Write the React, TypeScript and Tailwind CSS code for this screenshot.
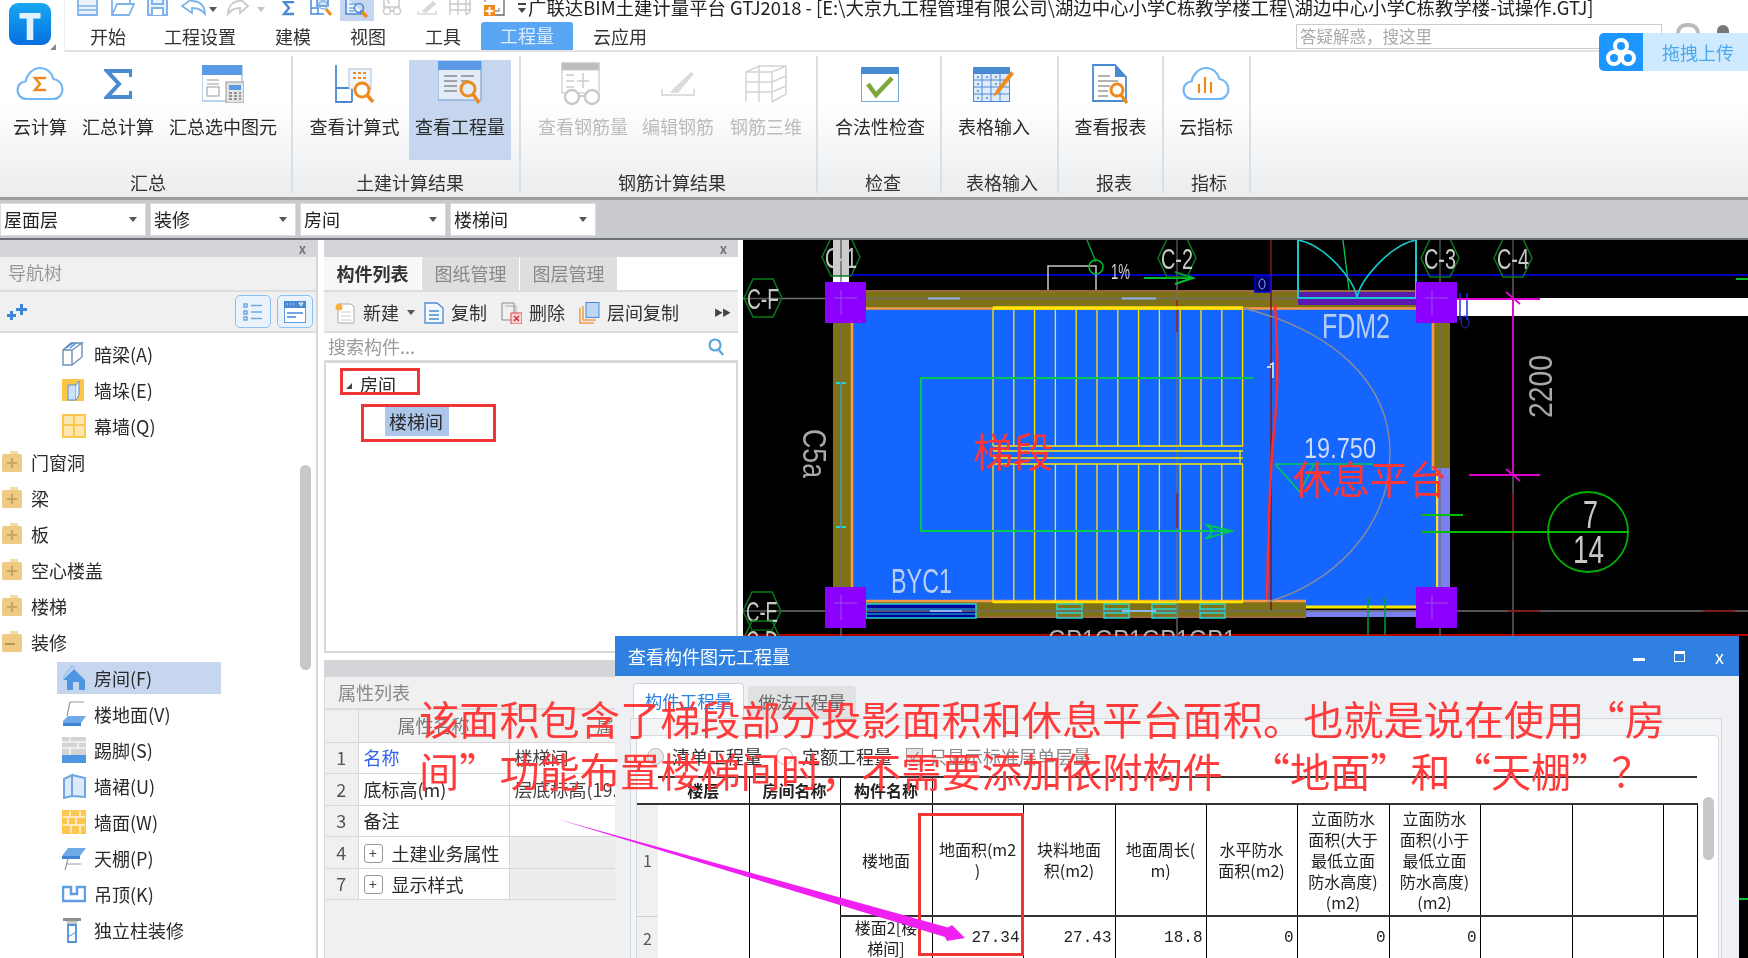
import React from "react";

const B = "#4a8ad4";
const LB = "#7fb4ea";
const O = "#ee8a1e";
const G = "#c8cacc";

function Cloud({ stroke = "#74b6f2", children }: { stroke?: string; children?: React.ReactNode }) {
  return (
    <svg width="48" height="36" viewBox="0 0 48 36" fill="none">
      <path d="M11 33C5 33 1.500 29 1.500 24c0-5 4-8.500 8-8.500C11 8 17 2 24 2c7 0 12 5 13.500 11 5 .5 9 5 9 10.500 0 5-4 9.500-9.500 9.500z" stroke={stroke} strokeWidth="2.200" />
      {children}
    </svg>
  );
}

function RibbonBtn({ w, label, off, active, children }: { w: number; label: string; off?: boolean; active?: boolean; children: React.ReactNode }) {
  return (
    <div style={{ width: w }} className={`flex flex-col items-center h-[100px] ${active ? "bg-[#c5d6ee]" : ""}`}>
      <div className="h-[48px] flex items-center justify-center">{children}</div>
      <div className={`mt-[6px] h-[24px] leading-[24px] text-[18px] whitespace-nowrap ${off ? "text-[#bcbcbc]" : "text-[#2a2a2a]"}`}>{label}</div>
    </div>
  );
}

function Group({ w, pl, label, lc, children }: { w: number; pl: number; label: string; lc: number; children: React.ReactNode }) {
  return (
    <div style={{ width: w }} className="h-[137px] mt-[4px] border-r-2 border-[#dcdfe1] flex flex-col shrink-0">
      <div style={{ paddingLeft: pl }} className="flex h-[114px] pt-[4px] shrink-0">{children}</div>
      <div style={{ marginLeft: lc }} className="w-0 flex justify-center text-[18px] leading-[24px] text-[#333] whitespace-nowrap">{label}</div>
    </div>
  );
}

const caret = (c: string) => <span className="block w-0 h-0 border-x-[4px] border-x-transparent" style={{ borderTop: `5px solid ${c}` }} />;

// [centre x, width, icon] of the quick access icons, cropped by the top of the window
const quick: [number, number, React.ReactNode][] = [
  [87.5, 21, <svg width="21" height="16" viewBox="0 0 21 16" fill="#eaf3fc" stroke={LB} strokeWidth="1.800"><path d="M1 -2v17h19V-2" /><path d="M1 6h19M1 10h19" strokeWidth="1.300" /></svg>],
  [123, 24, <svg width="24" height="16" viewBox="0 0 24 16" fill="none" stroke={LB} strokeWidth="1.800"><path d="M1 -2v17h17l5-11h-4V-2" /><path d="M1 15L6 4h17" /></svg>],
  [157.5, 21, <svg width="21" height="16" viewBox="0 0 21 16" fill="#eaf3fc" stroke={LB} strokeWidth="2"><path d="M1 -2v17h19V-2" /><path d="M5 15V8h11v7" fill="#fff" /><path d="M5 -2v6h11v-6" /></svg>],
  [193.5, 27, <svg width="27" height="16" viewBox="0 0 27 16" fill="none" stroke={LB} strokeWidth="1.800"><path d="M12 -1L2 6l10 7V8c6 0 10 2 13 6 0-8-5-13-13-13z" /></svg>],
  [213, 8, <span className="block mb-[4px]">{caret("#555")}</span>],
  [238.5, 23, <svg width="23" height="16" viewBox="0 0 23 16" fill="none" stroke={G} strokeWidth="1.800"><path d="M13 -1l8 7-8 7V8C8 8 4 10 1 14c0-8 5-13 12-13z" /></svg>],
  [261, 8, <span className="block mb-[4px]">{caret("#c4c4c4")}</span>],
  [288, 14, <svg width="14" height="15" viewBox="0 0 14 15" fill="none" stroke={B} strokeWidth="2.400"><path d="M13 1H3l5 6-5 6h10" /></svg>],
  [321.5, 23, <svg width="23" height="16" viewBox="0 0 23 16" fill="none" stroke={B} strokeWidth="1.500"><path d="M1 -2v16h13M1 8h7v6" /><rect x="7" y="-3" width="11" height="9" fill="#cfe1f5" /><circle cx="13" cy="5" r="4" stroke="#7fb4ea" /><path d="M16 9l5 6" stroke={O} strokeWidth="3" /></svg>],
];
const quick2: [number, number, React.ReactNode][] = [
  [392, 20, <svg width="20" height="16" viewBox="0 0 20 16" fill="none" stroke={G} strokeWidth="1.600"><path d="M2 -2v9h15v-9M6 3h2M6 -1v3" /><circle cx="5" cy="11" r="3.500" /><circle cx="15" cy="11" r="3.500" /><path d="M8.500 11h3" /></svg>],
  [427, 20, <svg width="20" height="15" viewBox="0 0 20 15" fill="none" stroke="#d8d8d8" strokeWidth="1.600"><path d="M1 10v3h18v-3" /><path d="M6 10L16 1l2 2L9 11z" fill="#d8d8d8" /></svg>],
  [460, 24, <svg width="24" height="16" viewBox="0 0 24 16" fill="none" stroke={G} strokeWidth="1.400"><path d="M2 -2v17M10 -2v17M18 -2v17M1 4h22M1 10h22M22 -2v14l-4 3" /></svg>],
  [494.5, 21, <svg width="21" height="16" viewBox="0 0 21 16" fill="none"><path d="M1 -2h19v17H10" stroke="#666" strokeWidth="1.300" /><path d="M15 8v3h-4" stroke="#999" strokeWidth="1.300" /><path d="M1 -2v4M5 -2h4" stroke="#666" /><rect x="0" y="5" width="11" height="11" fill="#f08a1e" /><path d="M4.500 7h2v3h3v2h-3v3h-2v-3h-3v-2h3z" fill="#fff" /></svg>],
];

function QuickRun({ items, start }: { items: [number, number, React.ReactNode][]; start: number }) {
  let end = start;
  return (
    <>
      {items.map(([c, w, n], i) => {
        const ml = c - w / 2 - end;
        end = c + w / 2;
        return (
          <div key={i} style={{ marginLeft: ml, width: w }} className="h-[16px] shrink-0 flex items-end justify-center overflow-hidden">{n}</div>
        );
      })}
    </>
  );
}

function Sel({ label }: { label: string }) {
  return (
    <div className="w-[146px] h-[33px] bg-white border border-[#dcdcdc] flex items-center justify-between pl-[3px] pr-[8px] text-[18px] text-[#222] shrink-0">
      <span>{label}</span>
      {caret("#555")}
    </div>
  );
}

function FolderPlus({ open }: { open?: boolean }) {
  return (
    <svg width="22" height="24" viewBox="0 0 22 24">
      <path d="M9 1h8v3H9z" fill="#f3dba8" />
      <rect x="1" y="4" width="20" height="18" rx="2" fill="#eeca82" />
      {open ? <path d="M4 13h10v2H4z" fill="#b8954c" /> : <path d="M10 8h2v4h4v2h-4v4h-2v-4H6v-2h4z" fill="#c9a45c" />}
    </svg>
  );
}

const treeIcon: Record<string, React.ReactNode> = {
  a: <svg width="22" height="24" viewBox="0 0 22 24" fill="none" stroke="#6d8fb8" strokeWidth="1.400"><path d="M1 8v15h9V8zM1 8l8-7h11l-10 7M10 23l10-8V1" /><path d="M4 6l7-5M8 6l6-5" stroke="#4a8ad4" /></svg>,
  e: <svg width="22" height="22" viewBox="0 0 22 22"><rect x="0" y="0" width="22" height="22" fill="#fbc548" /><path d="M6 6h8v15H6z" fill="#cfe1f5" stroke="#5f93cf" /><path d="M14 6l3-4v14l-3 5" fill="#e6f0fa" stroke="#5f93cf" /></svg>,
  q: <svg width="24" height="24" viewBox="0 0 24 24"><rect width="24" height="24" fill="#fcc74f" /><path d="M2 2h9v8H2zM13 2h9v8h-9zM2 12h9v10H2zM13 12h9v10h-9z" fill="#fde5ae" /></svg>,
  f: <svg width="24" height="28" viewBox="0 0 24 28"><path d="M12 5L23 16v10h-6v-8h-6v8H5V16H1z" fill="#4e95e2" /><path d="M1 14L10 2l3 2" fill="none" stroke="#9cc5ef" strokeWidth="2" /></svg>,
  v: <svg width="24" height="28" viewBox="0 0 24 28" fill="none"><path d="M1 21l5-5h18l-5 7H1z" fill="#6fa9e8" /><path d="M1 23h18v3H1z" fill="#3f86d8" /><path d="M5 16L8 2h14" stroke="#9a9a9a" strokeWidth="1.200" /></svg>,
  s: <svg width="24" height="26" viewBox="0 0 24 26"><rect width="24" height="18" fill="#d4d4d4" /><path d="M0 5h24M0 11h24M8 0v5M16 5v6M8 11v7" stroke="#f4f4f4" strokeWidth="1.500" /><rect y="18" width="24" height="8" fill="#4e95e2" /></svg>,
  u: <svg width="24" height="26" viewBox="0 0 24 26" fill="#dce9f8" stroke="#6fa5e0" strokeWidth="2"><path d="M2 6l8-4v21l-8 2zM10 2l13 3v19l-13-1" /></svg>,
  w: <svg width="24" height="24" viewBox="0 0 24 24"><rect width="24" height="24" fill="#fcc74f" /><path d="M1 7h22M1 15h22M8 1v6M18 1v6M6 7v8M14 7v8M9 15v8M18 15v8" stroke="#fdeac0" strokeWidth="2" /></svg>,
  p: <svg width="24" height="28" viewBox="0 0 24 28" fill="none"><path d="M0 12l6-8h18l-6 8z" fill="#6fa9e8" /><path d="M0 12h18v3H0z" fill="#3f86d8" /><path d="M6 15l-3 11M5 20h14" stroke="#9a9a9a" strokeWidth="1.200" /></svg>,
  k: <svg width="24" height="18" viewBox="0 0 24 18" fill="none" stroke="#5f9ee2" strokeWidth="2.500"><path d="M1 2v14h22V2h-8v7H9V2z" /></svg>,
  c: <svg width="20" height="26" viewBox="0 0 20 26" fill="none"><path d="M1 1h18v3H1z" fill="#8f8f8f" /><path d="M4 4h12l-2 4H6z" fill="#c8c8c8" /><path d="M6 8h8v17H6z" stroke="#4e8fd8" strokeWidth="1.800" /><path d="M6 20l8-5" stroke="#4e8fd8" /></svg>,
};

const subA = [["a", "暗梁(A)"], ["e", "墙垛(E)"], ["q", "幕墙(Q)"]];
const parents = ["门窗洞", "梁", "板", "空心楼盖", "楼梯"];
const subB = [["f", "房间(F)"], ["v", "楼地面(V)"], ["s", "踢脚(S)"], ["u", "墙裙(U)"], ["w", "墙面(W)"], ["p", "天棚(P)"], ["k", "吊顶(K)"], ["c", "独立柱装修"]];

function SubRow({ i, t, sel }: { i: string; t: string; sel?: boolean }) {
  return (
    <div className="h-[36px] flex items-center pl-[57px]">
      <div className={`w-[164px] h-[32px] flex items-center pl-[5px] ${sel ? "bg-[#c5d6ee]" : ""}`}>
        <div className="w-[32px] flex items-center">{treeIcon[i]}</div>
        <span className="text-[18px] text-[#2a2a2a] whitespace-nowrap">{t}</span>
      </div>
    </div>
  );
}

function ParentRow({ t, open }: { t: string; open?: boolean }) {
  return (
    <div className="h-[36px] flex items-center pl-[1px]">
      <div className="w-[30px]"><FolderPlus open={open} /></div>
      <span className="text-[18px] text-[#2a2a2a]">{t}</span>
    </div>
  );
}

function PanelHead({ closeMr }: { closeMr: number }) {
  return (
    <div className="h-[17px] bg-[#d4d5d9] flex items-center justify-end shrink-0">
      <span style={{ marginRight: closeMr }} className="text-[13px] leading-[14px] text-[#777] font-bold">x</span>
    </div>
  );
}

function Cad() {
  const steps = Array.from({ length: 13 }, (_, i) => 993 + i * 20.8);
  return (
    <svg width="1005" height="718" viewBox="743 240 1005 718" className="block font-['Liberation_Sans']">
      <rect x="743" y="240" width="1005" height="718" fill="#000" />
      <rect x="1457" y="298" width="291" height="18" fill="#fff" />
      <rect x="833" y="240" width="16" height="42" fill="#fff" />
      <path d="M850 275H1748" stroke="#0000c0" strokeWidth="2" />
      <path d="M743 635H1748" stroke="#b00000" strokeWidth="2" />
      {/* room */}
      <rect x="852" y="308" width="585" height="294" fill="#1565ff" />
      <rect x="1306" y="600" width="131" height="8" fill="#1565ff" />
      {/* walls */}
      <rect x="833" y="290" width="617" height="18" fill="#7f7216" />
      <rect x="833" y="290" width="19" height="312" fill="#7f7216" />
      <rect x="1431" y="290" width="19" height="180" fill="#7f7216" />
      <rect x="1437" y="468" width="13" height="150" fill="#7a80f0" />
      <rect x="833" y="600" width="473" height="18" fill="#7f7216" />
      <rect x="1306" y="610" width="144" height="7" fill="#7a80f0" />
      <path d="M833 291H1450M833 617H1306" stroke="#a06a4a" strokeWidth="1.500" />
      <path d="M1306 607H1416" stroke="#ffe600" strokeWidth="3" />
      <path d="M1437 470V605" stroke="#ffe600" strokeWidth="2" />
      <path d="M866 308.500H1416M852 323V600M866 601H1306M1433 323V470" stroke="#f59a4a" strokeWidth="2.500" fill="none" />
      {/* windows */}
      <path d="M841 383V527M836 383h10M836 527h10" stroke="#25d5d5" strokeWidth="2" fill="none" />
      <rect x="866" y="604" width="110" height="14" fill="#00009a" stroke="#25d5d5" strokeWidth="1.500" />
      <path d="M866 609H976M866 614H976" stroke="#25d5d5" />
      {[1057, 1104, 1152, 1200].map((x) => (
        <g key={x} fill="none" stroke="#25d5d5" strokeWidth="1.500"><rect x={x} y="604" width="25" height="14" /><path d={`M${x} 609h25M${x} 613h25`} /></g>
      ))}
      {/* axes */}
      <path d="M743 298.500H1457M743 611H1748M841 240V640M1177 240V636M1440 240V636M1513 240V636" stroke="#6f6f6f" strokeWidth="1.300" fill="none" />
      <path d="M1271 240V610" stroke="#7a1a1a" strokeWidth="1.500" />
      <path d="M1177 300V332M1177 493V528" stroke="#a02020" strokeWidth="1.500" />
      <path d="M1513 493V540M1508 611h32M1703 611h32" stroke="#8a0a0a" strokeWidth="1.500" />
      <path d="M928 298.500h32M1122 298.500h34M1314 298.500h32M930 611h32M1122 611h34" stroke="#8fb2f0" strokeWidth="2" />
      {/* stair */}
      {steps.map((x) => (
        <path key={x} d={`M${x} 307V446M${x} 464V603`} stroke="#ffe600" strokeWidth="1.300" />
      ))}
      <path d="M993 308H1243" stroke="#ffe600" strokeWidth="3.500" />
      <path d="M993 602H1243" stroke="#ffe600" strokeWidth="2.500" />
      <path d="M993 446H1243M993 451H1243M993 458H1243M993 464H1243" stroke="#ffe600" strokeWidth="1.500" />
      <path d="M1240 451V464" stroke="#ffe600" strokeWidth="1.300" />
      <path d="M1253 378H921V531H1232" stroke="#00c853" strokeWidth="2" fill="none" />
      <path d="M1207 525l25 6-25 7 6-7z" fill="none" stroke="#00c853" strokeWidth="1.800" />
      <path d="M1243 308C1330 330 1390 380 1390 453C1390 530 1330 585 1267 602" stroke="#8c8c96" strokeWidth="1.400" fill="none" />
      <path d="M1275 305C1278 350 1279 390 1274 430C1270 470 1268 540 1267 600" stroke="#ff2d2d" strokeWidth="2.500" fill="none" />
      <path d="M1270 365l3-2v15M1267 367h4" stroke="#fff" strokeWidth="1.400" fill="none" />
      <path d="M1275 464h98M1275 464l25 28 14-28" stroke="#00c853" strokeWidth="1.600" fill="none" />
      <path d="M1368 597V635M1385 597V635" stroke="#00a030" strokeWidth="1.500" />
      {/* door */}
      <rect x="1298" y="292" width="118" height="13" fill="#5a1ab0" />
      <path d="M1298 240V298M1416 240V298M1298 298H1416" stroke="#16c8d0" strokeWidth="2" fill="none" />
      <path d="M1298 240C1325 245 1355 280 1357 298M1416 240C1390 245 1360 280 1357 298" stroke="#16c8d0" strokeWidth="1.600" fill="none" />
      <path d="M1343 240L1349 290" stroke="#00c853" strokeWidth="1.300" />
      {/* columns */}
      {[[825, 282], [1416, 282], [825, 587], [1416, 587]].map(([x, y]) => (
        <g key={`${x}${y}`}>
          <rect x={x} y={y} width="41" height="41" fill="#8c00ff" />
          <path d={`M${x + 9} ${y + 16}h23M${x + 16} ${y + 8}v25`} fill="none" stroke="#a050d8" strokeWidth="1" />
        </g>
      ))}
      {/* level mark */}
      <path d="M1048 290V266H1096V290" stroke="#c8c8c8" strokeWidth="1.500" fill="none" />
      <path d="M1087 240L1096 262" stroke="#00b030" strokeWidth="1.300" />
      <ellipse cx="1096" cy="267" rx="7" ry="7" fill="none" stroke="#00c030" strokeWidth="1.500" />
      <path d="M1144 278H1190M1175 272l18 6-18 6" stroke="#00c030" strokeWidth="2" fill="none" />
      <rect x="1255" y="276" width="15" height="16" fill="#000060" stroke="#0000e0" strokeWidth="1.500" />
      <ellipse cx="1262" cy="284" rx="3" ry="5" fill="none" stroke="#8aa0ff" />
      <path d="M1460 293V320M1467 293V320" stroke="#2030e0" strokeWidth="1.500" />
      <ellipse cx="1465" cy="322" rx="4" ry="6" fill="none" stroke="#2030e0" />
      {/* dim */}
      <path d="M1513 298V475M1457 299H1540M1469 475H1540M1506 292l14 12M1506 469l14 12" stroke="#e000d0" strokeWidth="1.800" fill="none" />
      {/* section mark */}
      <ellipse cx="1588" cy="532" rx="40" ry="40" fill="none" stroke="#00b000" strokeWidth="1.800" />
      <path d="M1422 532H1628M1422 515H1463" stroke="#00c000" strokeWidth="2" />
      <path d="M1748 279h-12" stroke="#00c030" strokeWidth="2" />
      <path d="M1739 899H1748" stroke="#00c030" strokeWidth="2" />
      {/* axis bubbles */}
      {[[841, 257, "C-1"], [1177, 258, "C-2"], [1440, 258, "C-3"], [1513, 258, "C-4"], [763, 298, "C-F"], [762, 611, "C-E"], [762, 640, "C-D"]].map(([x, y, t]) => (
        <g key={t as string}>
          <path d={`M${(x as number) - 19} ${y}l9-19h20l9 19-9 19h-20z`} fill="#000" fillOpacity="0.2" stroke="#0a7a1a" strokeWidth="1.500" />
          <text x={(x as number) - 16} y={(y as number) + 11} fontSize="30" fill="#c4cac4" textLength="32" lengthAdjust="spacingAndGlyphs">{t}</text>
        </g>
      ))}
      <text x="1111" y="279" fontSize="22" fill="#d0d0d0" textLength="19" lengthAdjust="spacingAndGlyphs">1%</text>
      <text x="1322" y="338" fontSize="35" fill="#b8cdf2" textLength="68" lengthAdjust="spacingAndGlyphs">FDM2</text>
      <text x="1304" y="458" fontSize="29" fill="#cfdcf5" textLength="72" lengthAdjust="spacingAndGlyphs">19.750</text>
      <text x="891" y="593" fontSize="35" fill="#b8cdf2" textLength="61" lengthAdjust="spacingAndGlyphs">BYC1</text>
      <text x="1048" y="648" fontSize="26" fill="#b0b0b0" textLength="188" lengthAdjust="spacingAndGlyphs">GP1GP1GP1GP1</text>
      <text transform="translate(800 429) rotate(90)" fontSize="34" fill="#a8a8a8" textLength="49" lengthAdjust="spacingAndGlyphs" y="-3">C5a</text>
      <text transform="translate(1552 418) rotate(-90)" fontSize="33" fill="#a8a8a8" textLength="63" lengthAdjust="spacingAndGlyphs">2200</text>
      <text x="1583" y="528" fontSize="39" fill="#c8c8c8" textLength="15" lengthAdjust="spacingAndGlyphs">7</text>
      <text x="1573" y="563" fontSize="39" fill="#c8c8c8" textLength="31" lengthAdjust="spacingAndGlyphs">14</text>
      <text x="973" y="467" fontSize="40" fill="#ff3535" className="font-['Noto_Sans_CJK_SC']">梯段</text>
      <text x="1293" y="494" fontSize="38.500" fill="#ff3535" className="font-['Noto_Sans_CJK_SC']">休息平台</text>
    </svg>
  );
}

const propRows: { n: string; name: string; v?: string; blue?: boolean; plus?: boolean }[] = [
  { n: "1", name: "名称", v: "楼梯间", blue: true },
  { n: "2", name: "底标高(m)", v: "层底标高(19.750)" },
  { n: "3", name: "备注", v: "" },
  { n: "4", name: "土建业务属性", plus: true },
  { n: "7", name: "显示样式", plus: true },
];

const colW = [91, 91, 92, 91, 92, 91, 91, 92, 91, 92, 91, 34];
const cell = "border-r border-black text-center align-middle text-[16px] leading-[21px] text-[#222]";
const hdrs: React.ReactNode[] = [
  <>地面积(m2<br />)</>,
  <>块料地面<br />积(m2)</>,
  <>地面周长(<br />m)</>,
  <>水平防水<br />面积(m2)</>,
  <>立面防水<br />面积(大于<br />最低立面<br />防水高度)<br />(m2)</>,
  <>立面防水<br />面积(小于<br />最低立面<br />防水高度)<br />(m2)</>,
];
const vals = ["27.34", "27.43", "18.8", "0", "0", "0"];

function Dialog() {
  return (
    <div className="absolute left-[615px] top-[636px] w-[1124px] h-[322px] bg-[#eef0f3] flex flex-col overflow-hidden z-10">
      <div className="h-[40px] bg-[#2f80e0] flex items-center text-white shrink-0">
        <span className="ml-[13px] text-[18px]">查看构件图元工程量</span>
        <div className="ml-auto flex items-center mr-[15px]">
          <span className="block w-[12px] h-[3px] bg-white mt-[7px] mr-[29px]" />
          <span className="block w-[11px] h-[11px] border border-white border-t-[3px] mr-[30px]" />
          <span className="text-[18px] leading-[18px]">x</span>
        </div>
      </div>
      <div className="h-[42px] pt-[7px] pl-[18px] flex items-end gap-[4px] shrink-0">
        <div className="w-[111px] h-[35px] bg-white border border-b-0 border-[#cfd3d8] rounded-t-[4px] text-[#2a80e0] text-[17.500px] text-center leading-[34px]">构件工程量</div>
        <div className="w-[108px] h-[32px] bg-[#dfe1e3] rounded-t-[4px] text-[#666] text-[17.500px] text-center leading-[32px]">做法工程量</div>
      </div>
      <div className="flex-1 ml-[15px] mr-[17px] border border-[#d6d9dc] bg-[#f3f4f5] pt-[16px] pl-[5px] pr-[2px]">
        <div className="h-full bg-white border border-[#d6d9dc] rounded-t-[4px]">
          <div className="h-[40px] flex items-center text-[18px] text-[#333] pl-[10px]">
            <span className="w-[17px] h-[17px] rounded-full border border-[#b5b5b5] bg-[#e8e8e8] mr-[8px]" />
            <span>清单工程量</span>
            <span className="w-[17px] h-[17px] rounded-full border border-[#b5b5b5] ml-[14px] mr-[9px]" />
            <span>定额工程量</span>
            <span className="w-[17px] h-[17px] border border-[#999] bg-[#e5e5e5] ml-[14px] mr-[6px] flex items-center justify-center text-[12px] leading-none text-[#777]">✓</span>
            <span className="text-[#8a8a8a]">只显示标准层单层量</span>
          </div>
          <div className="flex">
            <table className="table-fixed border-collapse w-[1060px]">
              <colgroup>
                <col className="w-[21px]" />
                {colW.map((w, i) => <col key={i} style={{ width: w }} />)}
              </colgroup>
              <tbody>
                <tr className="h-[27px] border-b-2 border-[#333]">
                  <td className="bg-white border-0" />
                  {["楼层", "房间名称", "构件名称"].map((t) => <td key={t} className={`${cell} font-bold border-t-2 border-t-[#333]`}>{t}</td>)}
                  <td colSpan={9} className="border-t-2 border-t-[#333]" />
                </tr>
                <tr className="h-[112px]">
                  <td className="bg-[#f0f0f0] text-[#555] text-[16px] text-center border-b border-[#d0d0d0]">1</td>
                  <td className={cell} />
                  <td className={cell} />
                  <td className={`${cell} border-b-2 border-b-[#333]`}>楼地面</td>
                  {hdrs.map((h, i) => <td key={i} className={`${cell} border-b-2 border-b-[#333]`}>{h}</td>)}
                  {[0, 1, 2].map((i) => <td key={i} className={`${cell} border-b-2 border-b-[#333]`} />)}
                  <td className="border-b-2 border-b-[#333]" />
                </tr>
                <tr className="h-[44px]">
                  <td className="bg-[#f0f0f0] text-[#555] text-[16px] text-center">2</td>
                  <td className={cell} />
                  <td className={cell} />
                  <td className={`${cell} align-top`}>楼面2[楼<br />梯间]</td>
                  {vals.map((v, i) => <td key={i} className={`${cell} text-right pr-[3px] font-['Liberation_Mono'] text-[15px]`}>{v}</td>)}
                  {[0, 1, 2].map((i) => <td key={i} className={cell} />)}
                  <td />
                </tr>
              </tbody>
            </table>
            <div className="ml-[6px] mt-[21px] w-[11px] h-[63px] rounded-full bg-[#c8c8c8]" />
          </div>
        </div>
      </div>
    </div>
  );
}

export default function App() {
  return (
    <div className="relative w-[1748px] h-[958px] overflow-hidden bg-white flex flex-col font-['Noto_Sans_CJK_SC','Noto_Sans',sans-serif] blur-[0.5px]">
      {/* top */}
      <div className="h-[52px] flex shrink-0">
        <div className="w-[64px] relative pl-[9px] pt-[3px]">
          <div className="w-[42px] h-[42px] rounded-[9px] bg-linear-to-b from-[#1aa7f2] to-[#0a6fe0] flex items-center justify-center text-[#dff2ff] text-[36px] font-black leading-none">T</div>
          <span className="absolute right-[8px] bottom-[2px] w-0 h-0 border-l-[6px] border-l-transparent border-b-[6px] border-b-[#888]" />
        </div>
        <div className="flex-1 flex flex-col border-b-2 border-[#e2e2e2] border-l border-l-[#eee] min-w-0">
          <div className="h-[22px] flex items-start overflow-hidden">
            <QuickRun items={quick} start={65} />
            <div className="ml-[7px] w-[34px] h-[21px] shrink-0 bg-[#c5d6ee] flex items-start justify-center overflow-hidden">
              <svg width="24" height="18" viewBox="0 0 24 18" fill="none" stroke={B} strokeWidth="1.600"><path d="M1 -2v16h15V10" fill="#eaf3fc" /><path d="M4 4h8M4 8h6M4 11h5" strokeWidth="1.200" /><circle cx="14" cy="8" r="4.500" stroke={B} /><path d="M17 12l5 5" stroke={O} strokeWidth="3.500" /></svg>
            </div>
            <QuickRun items={quick2} start={374} />
            <div className="ml-[12px] w-[10px] flex flex-col items-center shrink-0 pt-[3px] gap-[3px]">
              <span className="block w-[8px] h-[1.500px] bg-[#444]" />
              {caret("#444")}
            </div>
            <span className="ml-[1px] mt-[-4px] text-[18.400px] leading-[22px] text-[#222] whitespace-nowrap">广联达BIM土建计量平台 GTJ2018 - [E:\大京九工程管理有限公司\湖边中心小学C栋教学楼工程\湖边中心小学C栋教学楼-试操作.GTJ]</span>
          </div>
          <div className="h-[28px] flex items-end text-[18px] leading-[27px] text-[#333]">
            <span className="ml-[25px]">开始</span>
            <span className="ml-[38px]">工程设置</span>
            <span className="ml-[39px]">建模</span>
            <span className="ml-[39px]">视图</span>
            <span className="ml-[39px]">工具</span>
            <span className="ml-[20px] w-[92px] h-[28px] bg-[#58a6f4] rounded-t-[3px] text-white/80 text-center">工程量</span>
            <span className="ml-[20px]">云应用</span>
            <div className="ml-auto self-start mt-[2px] w-[366px] h-[25px] border border-[#ccc] bg-white text-[16.500px] leading-[23px] text-[#aaa] pl-[3px]">答疑解惑，搜这里</div>
            <span className="ml-[14px] self-start mt-[1px] w-[24px] h-[20px] rounded-full border-[4px] border-[#bbb]" />
            <span className="ml-[17px] mr-[19px] self-start mt-[3px] w-[12px] h-[20px] rounded-t-full bg-[#777]" />
          </div>
        </div>
      </div>

      {/* ribbon */}
      <div className="h-[145px] shrink-0 flex bg-linear-to-b from-white from-35% to-[#eaecee]">
        <Group w={293} pl={1} label="汇总" lc={148}>
          <RibbonBtn w={78} label="云计算"><Cloud><path d="M30 12H19l5 6-5 6h11" fill="none" stroke={O} strokeWidth="2.500" /></Cloud></RibbonBtn>
          <RibbonBtn w={78} label="汇总计算"><svg width="28" height="30" viewBox="0 0 28 30" fill="none"><path d="M27 8V2H3l12 13L3 28h24v-6" stroke={B} strokeWidth="4" /></svg></RibbonBtn>
          <RibbonBtn w={132} label="汇总选中图元">
            <svg width="42" height="38" viewBox="0 0 42 38"><rect x="0" y="0" width="40" height="36" fill="#fff" stroke="#7aa9de" /><rect width="40" height="10" fill="#5b9ae6" /><path d="M5 15h12M5 19h12" stroke="#9a9a9a" /><rect x="5" y="22" width="12" height="9" fill="none" stroke="#9a9a9a" /><rect x="24" y="17" width="18" height="21" fill="#e4e4e4" stroke="#999" /><rect x="27" y="20" width="12" height="5" fill="#5b9ae6" /><path d="M27 28h3M32 28h3M37 28h2M27 31h3M32 31h3M37 31h2M27 34h3M32 34h3M37 34h2" stroke="#777" strokeWidth="1.500" /></svg>
          </RibbonBtn>
        </Group>
        <Group w={228} pl={7} label="土建计算结果" lc={117}>
          <RibbonBtn w={109} label="查看计算式">
            <svg width="40" height="40" viewBox="0 0 40 40" fill="none"><path d="M1 1v37h16M1 24h16v14" stroke="#4a8ad4" strokeWidth="1.800" /><rect x="14" y="5" width="22" height="20" fill="#f2f5fa" stroke="#a8c0dc" /><path d="M18 9h3M23 9h3M28 9h3M18 14h3M23 14h3M28 14h3" stroke={O} strokeWidth="2" /><circle cx="27" cy="26" r="7" stroke={O} strokeWidth="3" fill="#fff" /><path d="M32 31l6 7" stroke={O} strokeWidth="3.500" /></svg>
          </RibbonBtn>
          <RibbonBtn w={102} active label="查看工程量">
            <svg width="44" height="44" viewBox="0 0 44 44" fill="none" className="-mt-[2px]"><rect x="0" y="0" width="43" height="39" fill="#e3ecf7" stroke="#6c9ad0" /><rect width="43" height="9" fill="#5b9ae6" /><path d="M6 15h13M23 15h13M6 20h13M23 20h8M6 25h13M6 30h13" stroke="#8a8a8a" strokeWidth="1.500" /><circle cx="30" cy="28" r="7" stroke={O} strokeWidth="3" fill="#e3ecf7" /><path d="M35 33l6 9" stroke={O} strokeWidth="3.500" /></svg>
          </RibbonBtn>
        </Group>
        <Group w={297} pl={9} label="钢筋计算结果" lc={151}>
          <RibbonBtn w={106} off label="查看钢筋量">
            <svg width="44" height="44" viewBox="0 0 44 44" fill="none" stroke={G}><rect x="1" y="1" width="37" height="30" fill="#fff" strokeWidth="1.200" /><rect x="1" y="1" width="37" height="7" fill="#bdbdbd" /><path d="M5 13h8M5 19h8M5 25h8M22 11v15M16 19h12" strokeWidth="1.500" /><circle cx="11" cy="35" r="7" strokeWidth="2.500" fill="#fff" /><circle cx="31" cy="35" r="7" strokeWidth="2.500" fill="#fff" /><path d="M18 34h6" strokeWidth="2" /></svg>
          </RibbonBtn>
          <RibbonBtn w={84} off label="编辑钢筋">
            <svg width="36" height="26" viewBox="0 0 36 26" fill="none"><path d="M10 22h8L34 3l-3-2-18 17z" fill="#dcdcdc" /><path d="M2 18v6h32v-6" stroke="#dedede" strokeWidth="2" /></svg>
          </RibbonBtn>
          <RibbonBtn w={92} off label="钢筋三维">
            <svg width="42" height="38" viewBox="0 0 42 38" fill="none" stroke="#d4d4d4" strokeWidth="1.500"><path d="M1 7v30M14 7v30M27 7v30M1 7L14 1h27L27 7zM27 37l14-8V1M1 17h26l14-6M1 27h26l14-6M14 1v6M1 7h26" /></svg>
          </RibbonBtn>
        </Group>
        <Group w={124} pl={6} label="检查" lc={65}>
          <RibbonBtn w={112} label="合法性检查">
            <svg width="38" height="35" viewBox="0 0 38 35" fill="none"><rect x="0.500" y="0.500" width="37" height="34" fill="#fff" stroke="#7aa9de" /><rect width="38" height="7" fill="#4a8ad4" /><path d="M7 17l8 11L31 11" stroke="#7ea83a" strokeWidth="4.500" /></svg>
          </RibbonBtn>
        </Group>
        <Group w={117} pl={2} label="表格输入" lc={60}>
          <RibbonBtn w={100} label="表格输入">
            <svg width="42" height="35" viewBox="0 0 42 35" fill="none"><rect x="0.500" y="0.500" width="36" height="34" fill="#dfeafa" stroke="#4a8ad4" /><rect width="37" height="7" fill="#4a8ad4" /><path d="M9 7v28M18 7v28M27 7v28M0 13h37M0 20h37M0 27h37" stroke="#4a8ad4" /><path d="M4 10h2M13 10h2M22 10h2M4 17h2M22 17h2M4 24h2M13 31h2M4 31h2" stroke="#4a8ad4" strokeWidth="1.500" /><path d="M20 30l4-8L38 4l3 3-15 19z" fill={O} /></svg>
          </RibbonBtn>
        </Group>
        <Group w={105} pl={0} label="报表" lc={55}>
          <RibbonBtn w={104} label="查看报表">
            <svg width="38" height="40" viewBox="0 0 38 40" fill="none"><path d="M1 1h22l11 12v24H1z" fill="#fff" stroke="#4a8ad4" strokeWidth="1.800" /><path d="M23 1l11 12H23z" fill="#4a8ad4" /><path d="M6 12h12M6 17h20M6 22h12M6 27h10M6 32h10" stroke="#9a9a9a" strokeWidth="1.500" /><circle cx="25" cy="26" r="6" stroke={O} strokeWidth="3" fill="#fff" /><path d="M29 31l6 8" stroke={O} strokeWidth="3.500" /></svg>
          </RibbonBtn>
        </Group>
        <Group w={87} pl={0} label="指标" lc={45}>
          <RibbonBtn w={84} label="云指标"><Cloud><path d="M17 27V18M23 27V11M29 27V16" stroke={O} strokeWidth="2.200" /></Cloud></RibbonBtn>
        </Group>
      </div>

      {/* combo bar */}
      <div className="h-[3px] bg-[#9a9c9e] shrink-0" />
      <div className="h-[40px] bg-[#c8cacd] border-b-2 border-[#6c7075] flex items-center gap-[4px] shrink-0">
        <Sel label="屋面层" /><Sel label="装修" /><Sel label="房间" /><Sel label="楼梯间" />
      </div>

      {/* body */}
      <div className="flex-1 flex min-h-0">
        {/* nav */}
        <div className="w-[318px] h-full border-r-2 border-[#d8d8d8] flex flex-col shrink-0 relative">
          <PanelHead closeMr={10} />
          <div className="h-[35px] bg-[#f0f0f0] border-b-2 border-[#dcdcdc] flex items-center pl-[8px] pb-[2px] text-[18px] text-[#999] shrink-0">导航树</div>
          <div className="h-[41px] bg-[#f0f0f0] border-b-2 border-[#dcdcdc] flex items-center pl-[7px] shrink-0">
            <svg width="20" height="18" viewBox="0 0 20 18" fill="#3d85d8"><path d="M13 1h3v4h4v3h-4v4h-3V8H9V5h4zM3 8h3v3h3v3H6v3H3v-3H0v-3h3z" /></svg>
            <div className="ml-auto w-[36px] h-[33px] rounded-[5px] border border-[#8cc0f0] bg-[#eaf3fc] flex items-center justify-center">
              <svg width="20" height="20" viewBox="0 0 20 20" fill="none" stroke="#6fa5e0" strokeWidth="1.500"><rect x="1" y="2" width="3" height="3" /><rect x="1" y="9" width="3" height="3" /><rect x="1" y="15" width="3" height="3" /><path d="M8 3.500h11M8 10h11M8 16.500h11" /></svg>
            </div>
            <div className="ml-[6px] mr-[3px] w-[36px] h-[33px] rounded-[5px] border border-[#8cc0f0] bg-[#eaf3fc] flex items-center justify-center">
              <svg width="22" height="22" viewBox="0 0 22 22" fill="none"><rect x="0.500" y="0.500" width="21" height="21" fill="#fff" stroke="#5b9ae6" /><rect width="22" height="7" fill="#4a8ad4" /><path d="M3 11h16v2H3zM3 15h9v2H3z" fill="#6fa5e0" /><path d="M3 3h1M6 3h1M9 3h1M15 2h4l-2 3z" stroke="#fff" /></svg>
            </div>
          </div>
          <div className="flex-1 pt-[3px] overflow-hidden bg-white">
            {subA.map(([i, t]) => <SubRow key={t} i={i} t={t} />)}
            {parents.map((t) => <ParentRow key={t} t={t} />)}
            <ParentRow t="装修" open />
            {subB.map(([i, t]) => <SubRow key={t} i={i} t={t} sel={i === "f"} />)}
          </div>
          <div className="absolute left-[300px] top-[225px] w-[11px] h-[205px] rounded-full bg-[#c8c8c8]" />
        </div>

        {/* mid */}
        <div className="w-[414px] ml-[6px] h-full flex flex-col shrink-0">
          <PanelHead closeMr={11} />
          <div className="h-[35px] flex items-stretch border-b-2 border-[#dcdcdc] text-[18px] shrink-0">
            <div className="w-[97px] bg-[#f7f7f7] font-bold text-[#333] flex items-center justify-center">构件列表</div>
            <div className="w-[97px] ml-[1px] bg-[#dedede] text-[#888] flex items-center justify-center">图纸管理</div>
            <div className="w-[97px] ml-[1px] bg-[#dedede] text-[#888] flex items-center justify-center">图层管理</div>
          </div>
          <div className="h-[41px] bg-[#f0f0f0] border-b-2 border-[#dcdcdc] flex items-center pl-[10px] pt-[2px] text-[18px] text-[#333] shrink-0">
            <svg width="22" height="22" viewBox="0 0 22 22" fill="none"><path d="M4 2h13l3 3v16H4z" fill="#fff" stroke="#aaa" /><path d="M7 10h10M7 14h10M7 18h10" stroke="#ccc" /><circle cx="5" cy="5" r="3.500" fill="#f7b23c" /></svg>
            <span className="ml-[7px]">新建</span>
            <span className="ml-[8px]">{caret("#555")}</span>
            <svg className="ml-[9px]" width="20" height="22" viewBox="0 0 20 22" fill="none" stroke="#4a8ad4" strokeWidth="1.300"><path d="M1 1h12l6 5v15H1z" fill="#f4f8fd" /><path d="M5 9h10M5 13h10M5 17h10" /></svg>
            <span className="ml-[7px]">复制</span>
            <svg className="ml-[14px]" width="21" height="22" viewBox="0 0 21 22" fill="none"><path d="M1 1h12v17H1z" stroke="#888" /><path d="M4 4h11v14" stroke="#aaa" /><rect x="10" y="11" width="11" height="11" fill="#f8d4d4" stroke="#e04848" /><path d="M13 14l5 5M18 14l-5 5" stroke="#d83030" strokeWidth="1.500" /></svg>
            <span className="ml-[7px]">删除</span>
            <svg className="ml-[14px]" width="21" height="22" viewBox="0 0 21 22" fill="none"><path d="M1 6v15h14" stroke="#ee9a4a" strokeWidth="1.500" /><path d="M4 4v14h13" stroke="#ee9a4a" strokeWidth="1.500" /><rect x="7" y="0.500" width="13" height="15" fill="#bcd6f6" stroke="#4a8ad4" /></svg>
            <span className="ml-[7px] whitespace-nowrap">层间复制</span>
            <span className="ml-auto mr-[8px] text-[9px] text-[#444] tracking-[-1px]">▶▶</span>
          </div>
          <div className="h-[28px] bg-white border-b border-[#dcdcdc] flex items-center pl-[4px] pr-[14px] text-[18px] text-[#9a9a9a] shrink-0">
            <span>搜索构件...</span>
            <svg className="ml-auto" width="16" height="18" viewBox="0 0 16 18" fill="none" stroke="#5aa5d8" strokeWidth="2.200"><circle cx="7" cy="7" r="5.500" /><path d="M11 12l4 5" /></svg>
          </div>
          <div className="h-[292px] border-2 border-[#d8d8d8] bg-white relative shrink-0 text-[18px] text-[#2a2a2a] pt-[8px]">
            <div className="flex items-center h-[26px] pl-[20px]">
              <span className="w-0 h-0 border-l-[6px] border-l-transparent border-b-[6px] border-b-[#444] mt-[4px]" />
              <span className="ml-[8px]">房间</span>
            </div>
            <div className="ml-[59px] mt-[10px] w-[64px] h-[29px] bg-[#adc7ea] leading-[28px] pl-[4px] whitespace-nowrap">楼梯间</div>
            <div className="absolute left-[14px] top-[5px] w-[80px] h-[27px] border-[3px] border-[#f03535]" />
            <div className="absolute left-[35px] top-[41px] w-[135px] h-[38px] border-[3px] border-[#f03535]" />
          </div>
          <div className="h-[7px] shrink-0" />
          <div className="flex-1 flex flex-col border-x border-[#d8d8d8] min-h-0 bg-[#f0f0f0]">
            <PanelHead closeMr={11} />
            <div className="h-[33px] flex items-center pl-[13px] text-[18px] text-[#888] border-b-2 border-[#dcdcdc] shrink-0">属性列表</div>
            <table className="table-fixed border-collapse w-full text-[18px]">
              <colgroup><col className="w-[33px]" /><col className="w-[151px]" /><col /></colgroup>
              <tbody>
                <tr className="h-[32px] border-b border-[#d8d8d8]">
                  <td className="border-r border-[#d8d8d8]" />
                  <td className="border-r border-[#d8d8d8] text-center text-[#777]">属性名称</td>
                  <td className="text-center text-[#777]">属性值</td>
                </tr>
                {propRows.map((r) => (
                  <tr key={r.n} className="h-[31.500px] border-b border-[#d8d8d8]">
                    <td className="text-center text-[#555] border-r border-[#d8d8d8]">{r.n}</td>
                    <td className={`bg-white border-r border-[#d8d8d8] pl-[5px] whitespace-nowrap ${r.blue ? "text-[#3060f0]" : "text-[#2a2a2a]"}`}>
                      {r.plus ? (
                        <span className="inline-flex items-center">
                          <span className="w-[19px] h-[19px] rounded-[3px] border border-[#999] bg-white text-[14px] leading-[16px] text-center mr-[9px] text-[#444]">+</span>
                          {r.name}
                        </span>
                      ) : r.name}
                    </td>
                    <td className={`${r.plus ? "bg-[#ededed]" : "bg-white"} pl-[5px] whitespace-nowrap text-[#444]`}>{r.v}</td>
                  </tr>
                ))}
              </tbody>
            </table>
          </div>
        </div>

        {/* cad */}
        <div className="ml-[5px] flex-1 h-full overflow-hidden bg-black"><Cad /></div>
      </div>

      {/* floating */}
      <Dialog />

      <div className="absolute left-[1599px] top-[33px] w-[149px] h-[38px] rounded-l-[5px] overflow-hidden flex z-20">
        <div className="w-[44px] bg-[#1e96ff] flex items-center justify-center">
          <svg width="30" height="30" viewBox="0 0 30 30" fill="none" stroke="#fff" strokeWidth="4"><circle cx="15" cy="9" r="6" /><circle cx="8" cy="21" r="6" /><circle cx="22" cy="21" r="6" /></svg>
        </div>
        <div className="flex-1 bg-[#cfeaff] text-[#4aa8ee] text-[18px] flex items-center justify-center pl-[5px]">拖拽上传</div>
      </div>

      {/* annotation */}
      <div className="absolute left-[419px] top-[692px] text-[40.200px] leading-[52px] text-[#ff3b3b] whitespace-pre z-30">
        {"该面积包含了梯段部分投影面积和休息平台面积。也就是说在使用“房\n间”功能布置楼梯间时，不需要添加依附构件   “地面”和“天棚”？"}
      </div>
      <div className="absolute left-[918px] top-[813px] w-[106px] h-[143px] border-[3px] border-[#f03535] z-30" />
      <svg className="absolute left-[550px] top-[810px] z-30" width="430" height="148" viewBox="550 810 430 148">
        <path d="M557 819L948 927.500L952 925L965 938L947 941L945 937z" fill="#f020f0" />
      </svg>
    </div>
  );
}
